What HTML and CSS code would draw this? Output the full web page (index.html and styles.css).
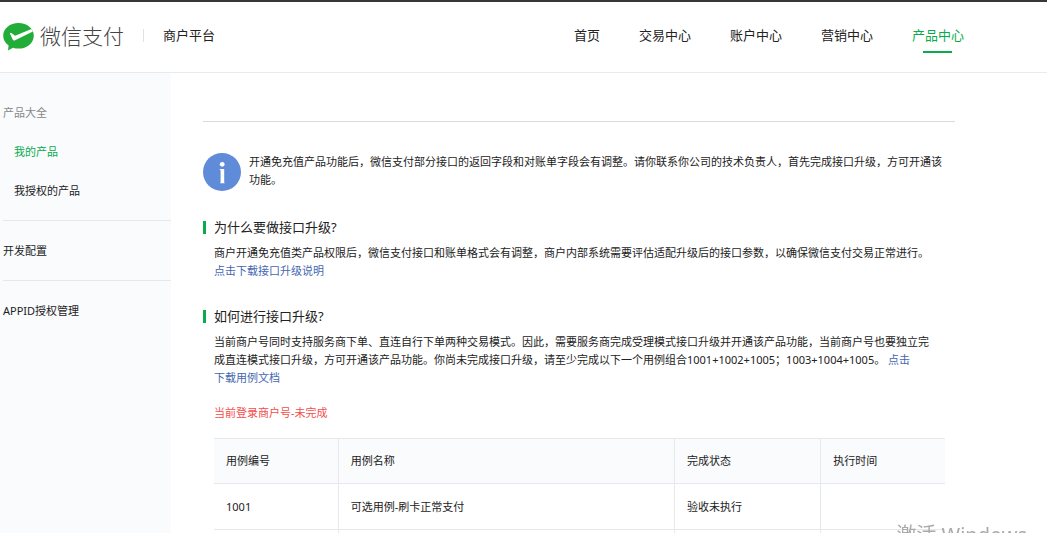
FILE: index.html
```
<!DOCTYPE html>
<html lang="zh-CN">
<head>
    <meta charset="UTF-8">
    <meta name="viewport" content="width=device-width, initial-scale=1.0">
    <title>微信支付 - 商户平台</title>
    <link rel="stylesheet" href="styles.css">
</head>
<body>
    <header class="header">
        <a href="#" class="logo">
            <svg class="logo-icon" viewBox="0 0 31 28" aria-hidden="true">
                <path d="M15.500 0C7 0 0.200 5.500 0.200 12.700c0 4 2.100 7.400 5.400 9.800L5 27.600l5-2.900c1.700.6 3.500.9 5.500.9 8.500 0 15.300-5.700 15.300-12.900C30.800 5.500 24 0 15.500 0z" fill="#22ac38"/>
                <path d="M6.800 10.200q.9-.8 1.900 0l3.400 2.600L28.400 5.900l1.500 2.700-18.300 8.800q-1.200.5-1.900-.8z" fill="#fff"/>
            </svg>
            <span class="logo-text">微信支付</span>
        </a>
        <span class="platform">商户平台</span>
        <nav class="nav">
            <a href="#">首页</a>
            <a href="#">交易中心</a>
            <a href="#">账户中心</a>
            <a href="#">营销中心</a>
            <a href="#" class="active">产品中心</a>
        </nav>
    </header>

    <div class="page">
        <aside class="sidebar">
            <div class="menu-group">
                <span class="menu-title">产品大全</span>
                <a href="#" class="sub active">我的产品</a>
                <a href="#" class="sub">我授权的产品</a>
            </div>
            <div class="menu-group">
                <a href="#">开发配置</a>
            </div>
            <div class="menu-group">
                <a href="#">APPID授权管理</a>
            </div>
        </aside>

        <main class="content">
            <div class="notice">
                <svg class="notice-icon" viewBox="0 0 38 38" aria-hidden="true">
                    <circle cx="19" cy="19" r="19" fill="#608bd9"/>
                    <circle cx="19.200" cy="11.300" r="2.400" fill="#fff"/>
                    <path d="M16.800 16h4.400v13.200l.6 1h-4.800l.6-1V17.200l-.8-.4z" fill="#fff"/>
                </svg>
                <p>开通免充值产品功能后，微信支付部分接口的返回字段和对账单字段会有调整。请你联系你公司的技术负责人，首先完成接口升级，方可开通该<br>功能。</p>
            </div>

            <section class="section">
                <h2>为什么要做接口升级?</h2>
                <p>商户开通免充值类产品权限后，微信支付接口和账单格式会有调整，商户内部系统需要评估适配升级后的接口参数，以确保微信支付交易正常进行。<br><a href="#">点击下载接口升级说明</a></p>
            </section>

            <section class="section">
                <h2>如何进行接口升级?</h2>
                <p>当前商户号同时支持服务商下单、直连自行下单两种交易模式。因此，需要服务商完成受理模式接口升级并开通该产品功能，当前商户号也要独立完<br>成直连模式接口升级，方可开通该产品功能。你尚未完成接口升级，请至少完成以下一个用例组合1001+1002+1005；1003+1004+1005。 <a href="#">点击<br>下载用例文档</a></p>
                <p class="status">当前登录商户号-未完成</p>
                <table class="case-table">
                    <thead>
                        <tr>
                            <th class="col-id">用例编号</th>
                            <th class="col-name">用例名称</th>
                            <th class="col-state">完成状态</th>
                            <th class="col-time">执行时间</th>
                        </tr>
                    </thead>
                    <tbody>
                        <tr>
                            <td>1001</td>
                            <td>可选用例-刷卡正常支付</td>
                            <td>验收未执行</td>
                            <td></td>
                        </tr>
                        <tr>
                            <td></td>
                            <td></td>
                            <td></td>
                            <td></td>
                        </tr>
                    </tbody>
                </table>
            </section>
        </main>
    </div>

    <div class="watermark">激活 Windows</div>
</body>
</html>
```
FILE: styles.css
```
* {
    box-sizing: border-box;
}
body {
    display: flex;
    flex-direction: column;
    height: 100vh;
    margin: 0;
    overflow: hidden;
    font-family: "Noto Sans", "Noto Sans CJK SC", sans-serif;
    font-size: 11px;
    line-height: 18px;
    color: #222;
    background-color: #fff;
}
a {
    color: inherit;
    text-decoration: none;
}
h2, p {
    margin: 0;
}

/* header */
.header {
    display: flex;
    flex-shrink: 0;
    align-items: center;
    height: 73px;
    padding: 0 83px 4px 3px;
    border-top: 2px solid #38353b;
    border-bottom: 1px solid #e7eaf1;
    font-size: 13px;
}
.logo {
    display: flex;
    align-items: center;
    gap: 6px;
}
.logo-icon {
    width: 31px;
    height: 28px;
    margin-top: 4px;
}
.logo-text {
    font-family: "Noto Sans CJK SC", sans-serif;
    font-size: 21px;
    font-weight: 300;
    line-height: 28px;
    color: #444;
}
.platform {
    margin-left: 19px;
    padding-left: 20px;
    background: linear-gradient(#dfe1e6, #dfe1e6) left center / 1px 13px no-repeat;
}
.nav {
    display: flex;
    gap: 39px;
    margin-left: auto;
}
.nav a {
    position: relative;
}
.nav .active {
    color: #09ab4c;
}
.nav .active::after {
    content: "";
    position: absolute;
    left: 50%;
    bottom: -9px;
    width: 29px;
    height: 2px;
    margin-left: -15px;
    background-color: #09ab4c;
}

/* sidebar */
.page {
    display: flex;
    flex: 1;
    min-height: 0;
}
.sidebar {
    flex: 0 0 171px;
    padding: 10px 0 0 3px;
    background-color: #f9fbfd;
}
.menu-group {
    display: flex;
    flex-direction: column;
    gap: 21px;
    padding: 21px 0 20px;
    border-bottom: 1px solid #e4e8ef;
}
.menu-group:last-child {
    border-bottom: none;
}
.menu-title {
    color: #888;
}
.sub {
    padding-left: 11px;
}
.sub.active {
    color: #09ab4c;
}

/* content */
.content {
    flex: 1;
    min-width: 0;
    padding: 48px 92px 0 32px;
}
.notice {
    display: flex;
    gap: 8px;
    padding-top: 31px;
    border-top: 1px solid #d9dadc;
}
.notice-icon {
    flex-shrink: 0;
    width: 38px;
    height: 38px;
}
.section {
    margin-top: 27px;
    padding: 0 10px 0 11px;
}
.section h2 {
    margin: 0 0 8px -11px;
    padding-left: 11px;
    font-size: 13px;
    font-weight: 400;
    background: linear-gradient(#09ab4c, #09ab4c) left center / 3px 13px no-repeat;
}
.section a {
    color: #4566b0;
}
.section .status {
    margin: 17px 0 16px;
    color: #f44d4d;
}
.case-table {
    width: 100%;
    table-layout: fixed;
    border-collapse: collapse;
}
.case-table th,
.case-table td {
    height: 46px;
    padding: 0 12px;
    border: 1px solid #e7e8ec;
    font-weight: 400;
    text-align: left;
}
.case-table th {
    height: 45px;
    background-color: #f9fbfd;
}
.case-table th:first-child,
.case-table td:first-child {
    border-left: none;
}
.case-table th:last-child,
.case-table td:last-child {
    border-right: none;
}
.col-id {
    width: 17%;
}
.col-name {
    width: 46%;
}
.col-state {
    width: 20%;
}
.col-time {
    width: 17%;
}

.watermark {
    position: fixed;
    right: 20px;
    bottom: -14px;
    font-size: 20px;
    line-height: 24px;
    color: #aaa;
}
```
